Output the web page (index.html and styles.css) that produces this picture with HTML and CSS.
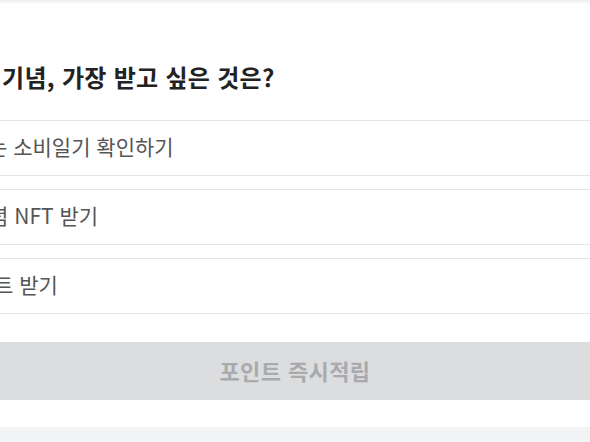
FILE: index.html
```html
<!DOCTYPE html>
<html lang="ko">
<head>
  <meta charset="UTF-8">
  <meta name="viewport" content="width=device-width, initial-scale=1.0">
  <title>포인트 즉시적립</title>
  <link rel="stylesheet" href="styles.css">
</head>
<body>

  <div class="top-shade"></div>

  <section class="survey">
    <h2 class="survey-title">기념, 가장 받고 싶은 것은?</h2>

    <ul class="options">
      <li class="option"><span class="cut cut-1">는</span> 소비일기 확인하기</li>
      <li class="option"><span class="cut cut-2">념</span> NFT 받기</li>
      <li class="option"><span class="cut cut-3">트</span> 받기</li>
    </ul>

    <button class="submit" disabled>포인트 즉시적립</button>
  </section>

  <div class="bottom-band"></div>

</body>
</html>
```

FILE: styles.css
```css
html, body {
  margin: 0;
  padding: 0;
}
body {
  font-family: "Noto Sans CJK KR", "Noto Sans", sans-serif;
  background: #fff;
  color: #222;
  width: 590px;
  height: 442px;
  overflow: hidden;
}
.top-shade {
  height: 4px;
  background: linear-gradient(#ececec, #fff);
}
.survey {
  padding-top: 58px;
}
.survey-title {
  margin: 0 0 28px 2px;
  font-size: 24px;
  font-weight: 700;
  line-height: 30px;
  color: #222;
  letter-spacing: 0.3px;
}
.options {
  list-style: none;
  margin: 0 -20px;
  padding: 0;
  display: flex;
  flex-direction: column;
  gap: 13px;
}
.option {
  box-sizing: border-box;
  height: 56px;
  border: 1px solid #e4e4e4;
  border-radius: 4px;
  padding: 0 0 5px 20px;
  display: flex;
  align-items: center;
  font-size: 21px;
  color: #555;
  white-space: pre;
}
.cut {
  display: inline-block;
}
.cut-1 { margin-left: -13px; }
.cut-2 { margin-left: -12px; }
.cut-3 { margin-left: -7px; }
.submit {
  display: block;
  width: 100%;
  height: 58px;
  margin-top: 28px;
  padding: 0 0 3px;
  border: none;
  background: #dcdddf;
  color: #a8aaad;
  font-family: inherit;
  font-size: 22px;
  font-weight: 700;
  letter-spacing: 0.4px;
}
.bottom-band {
  margin-top: 27px;
  height: 20px;
  background: #f3f4f6;
}
```
